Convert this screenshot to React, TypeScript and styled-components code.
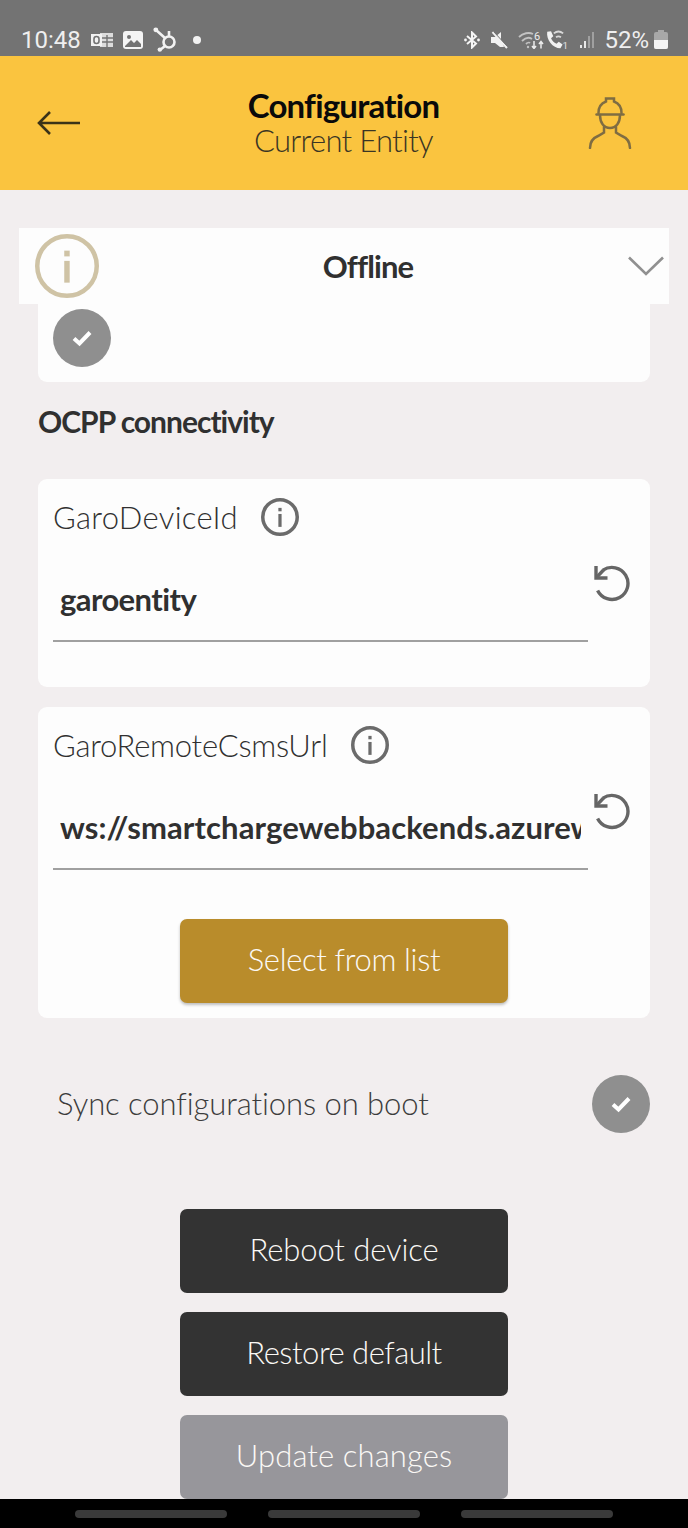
import styled, { createGlobalStyle } from "styled-components";

const GlobalStyle = createGlobalStyle`
  html, body {
    margin: 0;
    padding: 0;
    background: #f2eeef;
  }
  * {
    box-sizing: border-box;
  }
`;

const Screen = styled.div`
  width: 688px;
  height: 1528px;
  display: flex;
  flex-direction: column;
  overflow: hidden;
  background: #f2eeef;
  font-family: "Lato", "Open Sans", sans-serif;
  color: #303030;
`;

const StatusBar = styled.div`
  height: 56px;
  flex: none;
  display: flex;
  align-items: flex-end;
  justify-content: space-between;
  padding: 0 20px 0 21px;
  background: #737373;
  color: #efefef;
  font-family: "Roboto", sans-serif;
  font-size: 24px;
`;

const StatusGroup = styled.div<{ $gap?: number }>`
  display: flex;
  align-items: center;
  height: 33px;
  gap: ${(p) => p.$gap ?? 10}px;
`;

const Header = styled.header`
  height: 134px;
  flex: none;
  display: flex;
  align-items: center;
  justify-content: space-between;
  padding: 0 56px 0 37px;
  background: #fac43f;
`;

const HeaderTitles = styled.div`
  display: flex;
  flex-direction: column;
  align-items: center;
  color: #0a0a0a;
  margin-left: 18px;
`;

const Title = styled.div`
  font-size: 33px;
  line-height: 34px;
  font-weight: 700;
  letter-spacing: -0.8px;
`;

const Subtitle = styled.div`
  font-size: 31px;
  line-height: 36px;
  font-weight: 300;
  color: #3a3524;
  letter-spacing: -0.7px;
`;

const Content = styled.main`
  flex: 1;
  min-height: 0;
  display: flex;
  flex-direction: column;
  padding-top: 38px;
`;

const OfflineBar = styled.div`
  height: 76px;
  flex: none;
  margin: 0 19px;
  padding: 0 5px 0 16px;
  display: flex;
  align-items: center;
  justify-content: space-between;
  background: #fdfdfd;
`;

const OfflineLabel = styled.div`
  font-size: 31px;
  font-weight: 700;
  letter-spacing: -0.9px;
  margin-left: 9px;
`;

const Card = styled.section<{ $height: number; $flat?: boolean }>`
  height: ${(p) => p.$height}px;
  flex: none;
  margin: 0 38px;
  padding: 5px 15px 0;
  background: #fdfdfd;
  border-radius: ${(p) => (p.$flat ? "0 0 9px 9px" : "9px")};
`;

const Check = styled.div`
  width: 58px;
  height: 58px;
  display: flex;
  align-items: center;
  justify-content: center;
  border-radius: 50%;
  background: #8f8f8f;
`;

const SectionTitle = styled.h2`
  height: 97px;
  flex: none;
  margin: 0;
  padding: 0 38px 20px;
  display: flex;
  align-items: center;
  font-size: 30px;
  font-weight: 700;
  letter-spacing: -1px;
`;

const FieldLabelRow = styled.div<{ $spacing: number }>`
  height: 66px;
  display: flex;
  align-items: center;
  gap: 23px;
  font-size: 31px;
  font-weight: 300;
  letter-spacing: ${(p) => p.$spacing}px;
`;

const FieldRow = styled.div`
  display: flex;
  gap: 5px;
`;

const Input = styled.div`
  width: 535px;
  height: 92px;
  flex: none;
  display: flex;
  align-items: center;
  padding: 8px 7px 0;
  border-bottom: 2px solid #a0a0a0;
`;

const InputText = styled.div<{ $spacing: number }>`
  width: 100%;
  overflow: hidden;
  white-space: nowrap;
  font-size: 31px;
  font-weight: 700;
  letter-spacing: ${(p) => p.$spacing}px;
`;

const ResetIcon = styled.div`
  margin-top: 15px;
`;

const ActionButton = styled.button<{ $bg: string; $spacing: number; $shadow?: boolean }>`
  width: 328px;
  height: 84px;
  flex: none;
  display: block;
  margin: 0 auto;
  padding: 0 0 5px;
  border: 0;
  border-radius: 7px;
  background: ${(p) => p.$bg};
  color: #fbf9f6;
  font-family: inherit;
  font-size: 31px;
  font-weight: 300;
  letter-spacing: ${(p) => p.$spacing}px;
  box-shadow: ${(p) => (p.$shadow ? "0 2px 3px rgba(0, 0, 0, 0.25)" : "none")};
`;

const SelectButton = styled(ActionButton)`
  margin-top: 49px;
`;

const SyncRow = styled.div`
  height: 58px;
  flex: none;
  margin: 57px 38px 0 57px;
  display: flex;
  align-items: center;
  justify-content: space-between;
  font-size: 31px;
  font-weight: 300;
  letter-spacing: -0.08px;
  color: #3c3c3c;
`;

const SyncLabel = styled.span`
  margin-bottom: 2px;
`;

const ButtonStack = styled.div`
  margin-top: 76px;
  display: flex;
  flex-direction: column;
  gap: 19px;
`;

const NavBar = styled.nav`
  height: 29px;
  flex: none;
  display: flex;
  justify-content: center;
  gap: 41px;
  padding-top: 11px;
  background: #000;
`;

const NavPill = styled.div`
  width: 152px;
  height: 8px;
  border-radius: 4px;
  background: #3a3a3a;
`;

const CardGap = styled.div`
  height: 20px;
  flex: none;
`;

const Dot = styled.span`
  width: 8px;
  height: 8px;
  margin-left: 6px;
  border-radius: 50%;
  background: #f2f2f2;
`;

const InfoIcon = ({ size = 38, color = "#6b6b6b", stroke = 3.5 }: { size?: number; color?: string; stroke?: number }) => (
  <svg width={size} height={size} viewBox={`0 0 ${size} ${size}`} fill="none">
    <circle cx={size / 2} cy={size / 2} r={size / 2 - stroke / 2} stroke={color} strokeWidth={stroke} />
    <rect x={size * 0.457} y={size * 0.42} width={size * 0.085} height={size * 0.34} fill={color} />
    <rect x={size * 0.457} y={size * 0.26} width={size * 0.085} height={size * 0.09} fill={color} />
  </svg>
);

const CheckMark = () => (
  <svg width="22" height="18" viewBox="0 0 22 18" fill="none">
    <path d="M3 9.5L8.5 14.5L19 3.5" stroke="#fff" strokeWidth="4" />
  </svg>
);

const ResetGlyph = () => (
  <svg width="37" height="37" viewBox="0 0 37 37" fill="none" stroke="#666" strokeWidth="3.4">
    <path d="M10 5.2A16 16 0 1 1 4.6 25.5" />
    <path d="M3 1V13H14.5" />
    <path d="M3.6 12.4L10.5 5" />
  </svg>
);

const BackArrow = () => (
  <svg width="44" height="26" viewBox="0 0 44 26" fill="none">
    <path d="M43 13H2M13 2L2 13L13 24" stroke="#3a3318" strokeWidth="2.6" />
  </svg>
);

const WorkerIcon = () => (
  <svg width="44" height="52" viewBox="0 0 44 52" fill="none" stroke="#7f6d42" strokeWidth="2.5" strokeLinecap="round">
    <path d="M10.5 16C10.5 10 14 6 18 4.5V1.5H26V4.5C30 6 33.5 10 33.5 16" />
    <path d="M8.5 17.5H35.5" />
    <path d="M12 18C12 26 16 31 22 31C28 31 32 26 32 18" />
    <path d="M2 51C2 44 5 41 10 39L16 35.5V30" />
    <path d="M42 51C42 44 39 41 34 39L28 35.5V30" />
  </svg>
);

const Chevron = () => (
  <svg width="36" height="20" viewBox="0 0 36 20" fill="none">
    <path d="M1 1.5L18 18L35 1.5" stroke="#909090" strokeWidth="2.6" />
  </svg>
);

const OutlookIcon = () => (
  <svg width="22" height="16" viewBox="0 0 22 16">
    <rect x="9" y="1" width="13" height="14" fill="#dcdcdc" />
    <rect x="0" y="2" width="11" height="12" fill="#f2f2f2" />
    <rect x="3" y="4.5" width="5" height="7" rx="2.4" fill="none" stroke="#737373" strokeWidth="1.6" />
    <path d="M11 6H22M11 10H22M16 3V15" stroke="#737373" strokeWidth="1.4" />
  </svg>
);

const PictureIcon = () => (
  <svg width="20" height="18" viewBox="0 0 20 18">
    <rect x="0" y="0" width="20" height="18" rx="3" fill="#f4f4f4" />
    <circle cx="6" cy="6" r="2" fill="#737373" />
    <path d="M2 15L8 9L11 12L14 9L18 13V16H2Z" fill="#737373" />
  </svg>
);

const HubIcon = () => (
  <svg width="24" height="25" viewBox="0 0 24 25" fill="none" stroke="#f2f2f2" strokeWidth="2.6">
    <circle cx="16" cy="15" r="5.5" />
    <path d="M12 11L3 3M16 9V4M12 19L7 23" />
    <circle cx="2.8" cy="2.8" r="2.4" fill="#f2f2f2" stroke="none" />
    <circle cx="6.8" cy="22.6" r="2.2" fill="#f2f2f2" stroke="none" />
  </svg>
);

const BluetoothIcon = () => (
  <svg width="16" height="18" viewBox="0 0 16 18" fill="none" stroke="#f5f5f5" strokeWidth="2">
    <path d="M3 5L12 12.5L8 16.5V1.5L12 5.5L3 13" />
    <circle cx="1.5" cy="9" r="1.4" fill="#f5f5f5" stroke="none" />
    <circle cx="14.5" cy="9" r="1.4" fill="#f5f5f5" stroke="none" />
  </svg>
);

const MuteIcon = () => (
  <svg width="18" height="18" viewBox="0 0 18 18">
    <path d="M1 6H5L11 1V9L14 16H10L5 12H1Z" fill="#f2f2f2" />
    <path d="M2.5 1L17 17" stroke="#f2f2f2" strokeWidth="2" />
    <path d="M3.5 0.5L17.5 15.5" stroke="#737373" strokeWidth="1" />
  </svg>
);

const WifiIcon = () => (
  <svg width="27" height="18" viewBox="0 0 27 18" fill="none">
    <path d="M1 6C5 2 11 1 15 3M4 10C7 7 11 6 14 8M8 13C9 12 11 11 12 12" stroke="#c2c2c2" strokeWidth="1.8" />
    <circle cx="10" cy="16" r="1.2" fill="#c2c2c2" />
    <text x="16" y="9" fontSize="11" fontFamily="Roboto, sans-serif" fill="#ededed">
      6
    </text>
    <path d="M16 10V17M14 15L16 17.5L18 15M23 17.5V11M21 13L23 10.5L25 13" stroke="#ededed" strokeWidth="1.5" />
  </svg>
);

const CallIcon = () => (
  <svg width="22" height="20" viewBox="0 0 20 18" fill="none">
    <path d="M2 1.5L5.5 1L7.5 5.5L5.5 7.5C6.5 10 8 11.5 10.5 12.5L12.5 10.5L16 13L14 16.5C7 16.5 1 9 2 1.5Z" fill="#f2f2f2" />
    <path d="M8 3C10.5 1 14 1 16.5 3M10 6.5C11.5 5.5 13 5.5 14.5 6.5" stroke="#d9d9d9" strokeWidth="1.6" />
    <text x="16" y="17.5" fontSize="9" fontFamily="Roboto, sans-serif" fill="#e0e0e0">
      1
    </text>
  </svg>
);

const SignalIcon = () => (
  <svg width="17" height="18" viewBox="0 0 17 18">
    <rect x="3" y="14" width="2" height="3" fill="#e8e8e8" />
    <rect x="7" y="10" width="2" height="7" fill="#e8e8e8" />
    <rect x="11" y="5" width="2" height="12" fill="#a0a0a0" />
    <rect x="15" y="1" width="2" height="16" fill="#a0a0a0" />
  </svg>
);

const BatteryIcon = () => (
  <svg width="14" height="19" viewBox="0 0 14 19">
    <rect x="4" y="0" width="6" height="3" fill="#a8a8a8" />
    <rect x="0" y="2" width="14" height="17" rx="2" fill="#a8a8a8" />
    <path d="M0 10H14V17A2 2 0 0 1 12 19H2A2 2 0 0 1 0 17Z" fill="#f5f5f5" />
  </svg>
);

export default function App() {
  return (
    <>
      <GlobalStyle />
      <Screen>
        <StatusBar>
          <StatusGroup>
            <span>10:48</span>
            <OutlookIcon />
            <PictureIcon />
            <HubIcon />
            <Dot />
          </StatusGroup>
          <StatusGroup>
            <BluetoothIcon />
            <MuteIcon />
            <StatusGroup $gap={0}>
              <WifiIcon />
              <CallIcon />
            </StatusGroup>
            <SignalIcon />
            <StatusGroup $gap={5}>
              <span>52%</span>
              <BatteryIcon />
            </StatusGroup>
          </StatusGroup>
        </StatusBar>
        <Header>
          <BackArrow />
          <HeaderTitles>
            <Title>Configuration</Title>
            <Subtitle>Current Entity</Subtitle>
          </HeaderTitles>
          <WorkerIcon />
        </Header>
        <Content>
          <OfflineBar>
            <InfoIcon size={64} color="#cfc3a5" stroke={4.5} />
            <OfflineLabel>Offline</OfflineLabel>
            <Chevron />
          </OfflineBar>
          <Card $height={78} $flat>
            <Check>
              <CheckMark />
            </Check>
          </Card>
          <SectionTitle>OCPP connectivity</SectionTitle>
          <Card $height={208}>
            <FieldLabelRow $spacing={0.33}>
              GaroDeviceId
              <InfoIcon />
            </FieldLabelRow>
            <FieldRow>
              <Input>
                <InputText $spacing={-0.6}>garoentity</InputText>
              </Input>
              <ResetIcon>
                <ResetGlyph />
              </ResetIcon>
            </FieldRow>
          </Card>
          <CardGap />
          <Card $height={311}>
            <FieldLabelRow $spacing={-0.24}>
              GaroRemoteCsmsUrl
              <InfoIcon />
            </FieldLabelRow>
            <FieldRow>
              <Input>
                <InputText $spacing={0.1}>ws://smartchargewebbackends.azurewebsites.net</InputText>
              </Input>
              <ResetIcon>
                <ResetGlyph />
              </ResetIcon>
            </FieldRow>
            <SelectButton $bg="#b98c2b" $spacing={-0.35} $shadow>
              Select from list
            </SelectButton>
          </Card>
          <SyncRow>
            <SyncLabel>Sync configurations on boot</SyncLabel>
            <Check>
              <CheckMark />
            </Check>
          </SyncRow>
          <ButtonStack>
            <ActionButton $bg="#333333" $spacing={-0.1}>
              Reboot device
            </ActionButton>
            <ActionButton $bg="#333333" $spacing={-0.5}>
              Restore default
            </ActionButton>
            <ActionButton $bg="#97969b" $spacing={0.1}>
              Update changes
            </ActionButton>
          </ButtonStack>
        </Content>
        <NavBar>
          <NavPill />
          <NavPill />
          <NavPill />
        </NavBar>
      </Screen>
    </>
  );
}
